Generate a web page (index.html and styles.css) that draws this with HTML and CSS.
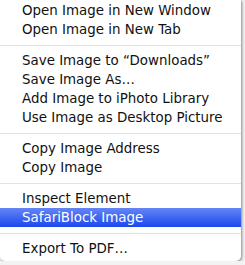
FILE: index.html
```html
<!DOCTYPE html>
<html lang="en">
<head>
    <meta charset="UTF-8">
    <title>Context Menu</title>
    <link rel="stylesheet" href="styles.css">
</head>
<body>
    <ul class="context-menu">
        <li class="menu-item">Open Image in New Window</li>
        <li class="menu-item">Open Image in New Tab</li>
        <li class="menu-sep"></li>
        <li class="menu-item">Save Image to &ldquo;Downloads&rdquo;</li>
        <li class="menu-item">Save Image As&hellip;</li>
        <li class="menu-item">Add Image to iPhoto Library</li>
        <li class="menu-item">Use Image as Desktop Picture</li>
        <li class="menu-sep"></li>
        <li class="menu-item">Copy Image Address</li>
        <li class="menu-item">Copy Image</li>
        <li class="menu-sep"></li>
        <li class="menu-item">Inspect Element</li>
        <li class="menu-item active">SafariBlock Image</li>
        <li class="menu-sep"></li>
        <li class="menu-item">Export To PDF&hellip;</li>
    </ul>
</body>
</html>
```

FILE: styles.css
```css
:root {
    --menu-bg: #ffffff;
    --text-color: #111111;
    --sep-color: #e2e2e2;
}
body {
    margin: 0;
    background-color: #f2f2f2;
    font-family: 'DejaVu Sans', 'Liberation Sans', sans-serif;
}

/* Menu */
.context-menu {
    list-style: none;
    margin: 0;
    padding: 1px 0 3px 0;
    width: 241px;
    background: var(--menu-bg);
    border-radius: 0 0 5px 5px;
    box-shadow: 1px 1px 3px rgba(0, 0, 0, 0.45);
}
.menu-item {
    height: 19px;
    line-height: 19px;
    padding-left: 22px;
    font-size: 13.4px;
    color: var(--text-color);
    white-space: nowrap;
}
.menu-item.active {
    color: #ffffff;
    background: linear-gradient(to bottom, #6585f6, #1b49ee);
}
.menu-sep {
    height: 12px;
    display: flex;
    align-items: center;
}
.menu-sep::after {
    content: '';
    flex: 1;
    height: 1px;
    background: var(--sep-color);
}
```
